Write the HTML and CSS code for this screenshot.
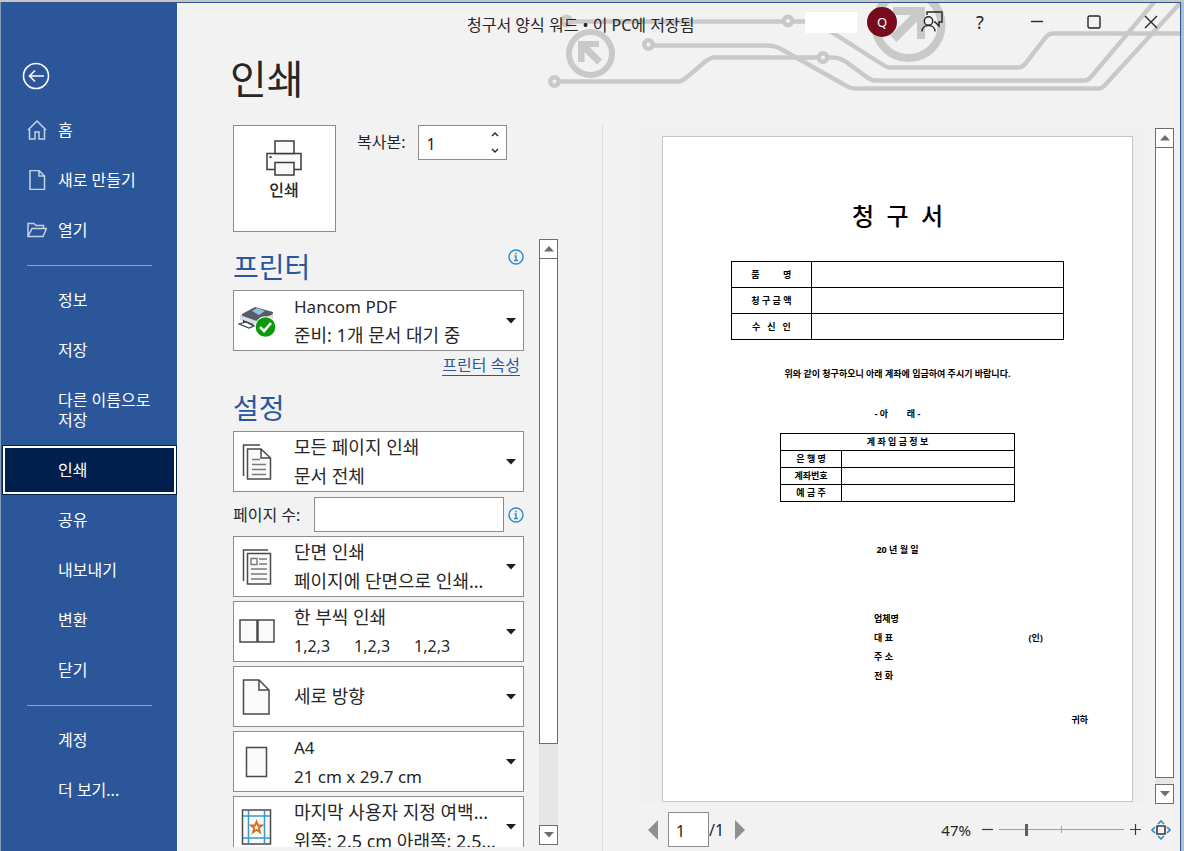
FILE: index.html
```html
<!DOCTYPE html>
<html lang="ko">
<head>
<meta charset="utf-8">
<title>인쇄</title>
<link rel="stylesheet" href="styles.css">
</head>
<body>
<div class="window">
  <nav class="sidebar" aria-label="파일 메뉴">
    <button class="back" aria-label="뒤로">
      <svg width="28" height="28" viewBox="0 0 28 28"><circle cx="14" cy="14" r="12.5"/><path d="M22 14H8M13 8.500L7.500 14l5.500 5.500"/></svg>
    </button>
    <ul class="menu">
      <li><a href="#"><svg class="menu-icon" viewBox="0 0 20 20"><path d="M1 10L10 1l9 9M2.500 9v10H8v-7h4v7h5.500V9"/></svg>홈</a></li>
      <li><a href="#"><svg class="menu-icon" viewBox="0 0 20 20"><path d="M3 .5h9l5.500 5.500v13.500H3zM12 .5V6h5.500"/></svg>새로 만들기</a></li>
      <li><a href="#"><svg class="menu-icon" viewBox="0 0 20 20"><path d="M1 16.500V3.500h6l2 2h7.500v3M1 16.500L5 8.500h14.500L16 16.500z"/></svg>열기</a></li>
      <li class="rule"></li>
      <li><a href="#">정보</a></li>
      <li><a href="#">저장</a></li>
      <li><a href="#">다른 이름으로 저장</a></li>
      <li><a href="#" class="current" aria-current="page">인쇄</a></li>
      <li><a href="#">공유</a></li>
      <li><a href="#">내보내기</a></li>
      <li><a href="#">변환</a></li>
      <li><a href="#">닫기</a></li>
      <li class="rule"></li>
      <li><a href="#">계정</a></li>
      <li><a href="#">더 보기...</a></li>
    </ul>
  </nav>

  <div class="content">
    <svg class="circuit" width="635" height="92" viewBox="545 3 635 92" aria-hidden="true">
      <g class="trace">
        <path d="M572 21.500H782M794 21.500H812L833 33 884 65.500Q887 67.500 890 67.500H1018Q1022 67.500 1025 64L1046 37Q1049 33.500 1053 33.500H1180"/>
        <path d="M654 45.500H768Q775 45.500 781 49L843 84Q850 88.500 855 88.500H1098Q1102 88.500 1105 85L1182 1"/>
        <path d="M560 81.500H677Q682 81.500 687 77L703 63.500Q710 57.500 714 57.500H817M829 57.500H833Q842 58 849 64L866 76.500Q871 80.500 875 80.500H1084Q1088 80.500 1091 77L1155 1"/>
        <circle cx="566.500" cy="21" r="4.300"/><circle cx="788" cy="21" r="4.300"/><circle cx="648.500" cy="44.500" r="4.300"/><circle cx="554.500" cy="81.500" r="4.300"/><circle cx="823" cy="57.500" r="4.300"/>
      </g>
      <circle class="ring" cx="590.500" cy="53.500" r="21.500" stroke-width="6"/>
      <path class="arrow" d="M578 41h21v6h-9.500L602 59.500 597 64.500 584.500 52v10H578z"/>
      <circle class="ring" cx="908.500" cy="25" r="33" stroke-width="8"/>
      <path class="arrow" d="M893 7h32v32h-8V21.500L896.500 42 890.500 35.500 911 15h-18z"/>
    </svg>

    <header class="titlebar">
      <div class="doc-title">청구서 양식 워드 • 이 PC에 저장됨</div>
      <div class="user-name"></div>
      <button class="avatar">Q</button>
      <button class="win-btn feedback" aria-label="피드백"><svg width="24" height="24" viewBox="0 0 24 24"><path d="M7 5V2h15v10h-3v4l-4-4h-1"/><circle cx="8.500" cy="11" r="4.200"/><path d="M2 21.500C2 17.500 5 15.500 8.500 15.500s6.500 2 6.500 6"/></svg></button>
      <button class="win-btn help" aria-label="도움말">?</button>
      <button class="win-btn" aria-label="최소화"><svg width="14" height="14" viewBox="0 0 14 14"><path d="M1 6.500h12"/></svg></button>
      <button class="win-btn" aria-label="최대화"><svg width="14" height="14" viewBox="0 0 14 14"><rect x="1" y="1" width="12" height="12" rx="1.500"/></svg></button>
      <button class="win-btn" aria-label="창 닫기"><svg width="14" height="14" viewBox="0 0 14 14"><path d="M1 1l12 12M13 1L1 13"/></svg></button>
    </header>

    <h1>인쇄</h1>

    <main class="panes">
      <section class="settings">
        <div class="print-row">
          <button class="print-btn">
            <svg width="36" height="36" viewBox="0 0 36 36"><path class="paper-fill" d="M1 13.500h34v16H1z"/><path class="paper-fill" d="M9 1h19v12.500H9zM9 22.500h19V35H9z"/><path class="solid" d="M3.500 16h2v2h-2z"/></svg>
            인쇄
          </button>
          <label for="copies">복사본:</label>
          <div class="spinner">
            <input id="copies" type="text" value="1">
            <button class="step" aria-label="늘리기"><svg width="8" height="5" viewBox="0 0 8 5"><path d="M1 4l3-3 3 3"/></svg></button>
            <button class="step" aria-label="줄이기"><svg width="8" height="5" viewBox="0 0 8 5"><path d="M1 1l3 3 3-3"/></svg></button>
          </div>
        </div>

        <div class="scroller">
          <div class="options">
            <div class="head printer-head">
              <h2>프린터</h2>
              <svg class="info" viewBox="0 0 16 16" role="img" aria-label="정보"><circle cx="8" cy="8" r="7"/><path d="M6.500 7H8v4.500M6 11.500h4M7.200 4.500h1.600" /></svg>
            </div>
            <button class="combo" aria-haspopup="listbox">
              <svg class="combo-icon" viewBox="0 0 38 36"><path fill="#565d66" d="M4 11L17 4l18 5-1 8-14 6L4 17z"/><path fill="#d9dde1" d="M2 12l17 6v6L2 17zM20 18l15-7v6l-15 7z"/><path fill="#8fc0e2" d="M14 8l5-3 8 3-6 4z"/><path fill="#2c3138" d="M5 17l10 4v3L5 19z"/><path fill="#fff" stroke="#3c424a" stroke-width="1.300" d="M1 21l7-2 8 4-5 2z"/><circle cx="27.500" cy="24" r="10.700" fill="#fff"/><circle cx="27.500" cy="24" r="9.800" fill="#0a9a0a"/><path fill="none" stroke="#fff" stroke-width="2.600" d="M22 24l4 4 7-8"/></svg>
              <span class="combo-text"><span class="latin">Hancom PDF</span><span>준비: 1개 문서 대기 중</span></span>
              <svg class="caret" viewBox="0 0 10 6"><path d="M0 0h10L5 5.500z"/></svg>
            </button>
            <a class="props" href="#">프린터 속성</a>

            <div class="head"><h2>설정</h2></div>
            <div class="stack">
              <button class="combo" aria-haspopup="listbox">
                <svg class="combo-icon" viewBox="0 0 38 36"><g class="line"><path d="M5.500 32V1H22"/><path class="paper-fill" d="M9.500 5H23l9.500 9v21h-23zM23 5v9h9.500"/></g><path class="thin" d="M14 15.500h8M14 20.500h14M14 25.500h14M14 30.500h14"/></svg>
                <span class="combo-text"><span>모든 페이지 인쇄</span><span>문서 전체</span></span>
                <svg class="caret" viewBox="0 0 10 6"><path d="M0 0h10L5 5.500z"/></svg>
              </button>
              <div class="pages">
                <label for="pages">페이지 수:</label>
                <input id="pages" type="text">
                <svg class="info" viewBox="0 0 16 16" role="img" aria-label="정보"><circle cx="8" cy="8" r="7"/><path d="M6.500 7H8v4.500M6 11.500h4M7.200 4.500h1.600"/></svg>
              </div>
              <button class="combo" aria-haspopup="listbox">
                <svg class="combo-icon" viewBox="0 0 38 36"><g class="line"><path d="M5.500 32V1H30"/><path class="paper-fill" d="M9.500 4.500h23V35h-23z"/></g><path class="thin" d="M13 9.500h6v6h-6zM21 10h8M21 15h8M13 20h16M13 25h16M13 30h16"/></svg>
                <span class="combo-text"><span>단면 인쇄</span><span>페이지에 단면으로 인쇄...</span></span>
                <svg class="caret" viewBox="0 0 10 6"><path d="M0 0h10L5 5.500z"/></svg>
              </button>
              <button class="combo" aria-haspopup="listbox">
                <svg class="combo-icon" viewBox="0 0 38 36"><g class="line"><path class="paper-fill" d="M2 6h17v22H2zM20 6h16v22H20z"/></g></svg>
                <span class="combo-text"><span>한 부씩 인쇄</span><span class="triples"><span>1,2,3</span><span>1,2,3</span><span>1,2,3</span></span></span>
                <svg class="caret" viewBox="0 0 10 6"><path d="M0 0h10L5 5.500z"/></svg>
              </button>
              <button class="combo" aria-haspopup="listbox">
                <svg class="combo-icon" viewBox="0 0 38 36"><g class="line"><path class="paper-fill" d="M5.500 1H21l10 10v24H5.500zM21 1v10h10"/></g></svg>
                <span class="combo-text"><span>세로 방향</span></span>
                <svg class="caret" viewBox="0 0 10 6"><path d="M0 0h10L5 5.500z"/></svg>
              </button>
              <button class="combo" aria-haspopup="listbox">
                <svg class="combo-icon" viewBox="0 0 38 36"><g class="line"><path class="paper-fill" d="M8.500 3.500h20v29h-20z"/></g></svg>
                <span class="combo-text"><span class="latin">A4</span><span class="latin">21 cm x 29.7 cm</span></span>
                <svg class="caret" viewBox="0 0 10 6"><path d="M0 0h10L5 5.500z"/></svg>
              </button>
              <button class="combo" aria-haspopup="listbox">
                <svg class="combo-icon" viewBox="0 0 38 36"><g class="line"><path class="paper-fill" d="M4.500 1h28v34h-28z"/></g><path fill="none" stroke="#3a96d0" stroke-width="1.500" d="M10.500 2v32M26.500 2v32M5 7h27M5 29h27"/><path fill="none" stroke="#d96b14" stroke-width="1.800" d="M18.500 12.500l1.500 4h4l-3.200 2.600 1.200 4.200-3.500-2.500-3.500 2.500 1.200-4.200L13 16.500h4z"/></svg>
                <span class="combo-text"><span>마지막 사용자 지정 여백...</span><span>위쪽: 2.5 cm 아래쪽: 2.5...</span></span>
                <svg class="caret" viewBox="0 0 10 6"><path d="M0 0h10L5 5.500z"/></svg>
              </button>
            </div>
          </div>
          <div class="scrollbar">
            <button aria-label="위로"><svg class="caret" viewBox="0 0 10 6"><path d="M0 5.500h10L5 0z"/></svg></button>
            <div class="thumb"></div>
            <div class="track"></div>
            <button aria-label="아래로"><svg class="caret" viewBox="0 0 10 6"><path d="M0 0h10L5 5.500z"/></svg></button>
          </div>
        </div>
      </section>

      <section class="preview" aria-label="미리 보기">
        <div class="stage">
          <div class="canvas">
            <article class="paper">
              <h3>청&nbsp; 구&nbsp; 서</h3>
              <table class="bill">
                <tr><th>품&nbsp; &nbsp; &nbsp; &nbsp; &nbsp; 명</th><td></td></tr>
                <tr><th>청 구 금 액</th><td></td></tr>
                <tr><th>수&nbsp; &nbsp;신&nbsp; &nbsp;인</th><td></td></tr>
              </table>
              <p class="notice">위와 같이 청구하오니 아래 계좌에 입금하여 주시기 바랍니다.</p>
              <p class="below">- 아&nbsp; &nbsp; &nbsp; &nbsp; 래 -</p>
              <table class="account">
                <colgroup><col class="key"><col></colgroup>
                <tr><th colspan="2">계 좌 입 금 정 보</th></tr>
                <tr><th>은 행 명</th><td></td></tr>
                <tr><th>계좌번호</th><td></td></tr>
                <tr><th>예 금 주</th><td></td></tr>
              </table>
              <p class="date">20 년 월 일</p>
              <div class="signer">
                <p>업체명</p>
                <p class="seal"><span>대 표</span><span>(인)</span></p>
                <p>주 소</p>
                <p>전 화</p>
              </div>
              <p class="to">귀하</p>
            </article>
          </div>
          <div class="scrollbar">
            <button aria-label="위로"><svg class="caret" viewBox="0 0 10 6"><path d="M0 5.500h10L5 0z"/></svg></button>
            <div class="thumb"></div>
            <div class="track"></div>
            <button aria-label="아래로"><svg class="caret" viewBox="0 0 10 6"><path d="M0 0h10L5 5.500z"/></svg></button>
          </div>
        </div>
        <footer class="pager">
          <button class="turn" aria-label="이전 페이지"><svg width="10" height="20" viewBox="0 0 10 20"><path d="M10 0v20L0 10z"/></svg></button>
          <input class="page-no" type="text" value="1" aria-label="현재 페이지">
          <span class="total">/1</span>
          <button class="turn" aria-label="다음 페이지"><svg width="10" height="20" viewBox="0 0 10 20"><path d="M0 0v20l10-10z"/></svg></button>
          <span class="percent">47%</span>
          <button class="zoom-btn" aria-label="축소"><svg width="11" height="11" viewBox="0 0 11 11"><path d="M0 5.500h11"/></svg></button>
          <input class="zoom" type="range" min="10" max="200" value="50" aria-label="확대/축소">
          <button class="zoom-btn" aria-label="확대"><svg width="11" height="11" viewBox="0 0 11 11"><path d="M0 5.500h11M5.500 0v11"/></svg></button>
          <button class="fit" aria-label="페이지 확대/축소"><svg width="20" height="20" viewBox="0 0 20 20"><path class="blue" d="M7 4l3-3 3 3M7 16l3 3 3-3M4 7l-3 3 3 3M16 7l3 3-3 3"/><path class="dark" d="M6 6h8v8H6z"/></svg></button>
        </footer>
      </section>
    </main>
  </div>
</div>
</body>
</html>
```

FILE: styles.css
```css
* { box-sizing: border-box; }

body {
  margin: 0;
  height: 100vh;
  padding: 2px 3px 0 1px;
  overflow: hidden;
  background: linear-gradient(90deg, #7f9bb8 50%, #b4bfcb 50%);
  color: #262626;
  font: 16px/20px "Noto Sans", "Noto Sans CJK KR", sans-serif;
}

body::before {
  content: "";
  position: absolute;
  inset: 0 0 auto 0;
  height: 2px;
  background: #c9c6c2;
}

button, input {
  margin: 0;
  padding: 0;
  border: 0;
  border-radius: 0;
  background: none;
  color: inherit;
  font: inherit;
}

h1, h2, h3, p, ul { margin: 0; padding: 0; font-weight: inherit; }
svg { flex: none; display: block; }

.window {
  display: grid;
  grid-template-columns: 176px minmax(0, 1fr);
  height: 100%;
  border-top: 1px solid #2b5797;
  border-right: 1px solid #2b5797;
  background: #f2f2f2;
}

/* Sidebar */
.sidebar { background: #2b579a; color: #fff; padding-top: 59px; }
.back { display: block; margin-left: 21px; height: 43px; }
.back svg { fill: none; stroke: #fff; stroke-width: 1.6; margin-bottom: 15px; }
.menu { list-style: none; }
.menu a {
  display: flex;
  position: relative;
  padding: 15px 16px 15px 57px;
  color: inherit;
  text-decoration: none;
}
.menu-icon {
  position: absolute;
  left: 26px;
  top: 15px;
  width: 20px;
  height: 20px;
  fill: none;
  stroke: #c5d1e5;
  stroke-width: 1.5;
}
.menu .rule { height: 1px; margin: 10px 25px 9px 26px; background: #8aa5cd; }
.menu .current {
  margin-left: 1px;
  padding-left: 56px;
  background: #001f4d;
  box-shadow: inset 0 0 0 1px #001f4d, inset 0 0 0 3px #fff;
}

/* Title bar */
.content { position: relative; display: flex; flex-direction: column; min-width: 0; min-height: 0; }
.circuit { position: absolute; top: 0; right: 0; }
.trace { fill: none; stroke: #c9c9c9; stroke-width: 4.4; }
.ring { fill: none; stroke: #c9c9c9; }
.arrow { fill: #c9c9c9; }
.titlebar { position: relative; display: flex; align-items: center; height: 38px; padding-right: 12px; }
.doc-title { flex: 1; padding: 5px 0 0 290px; white-space: nowrap; }
.user-name { width: 52px; height: 21px; background: #fff; }
.avatar {
  width: 30px;
  height: 30px;
  margin: 0 23px 0 10px;
  border-radius: 50%;
  background: #750b1c;
  color: #fff;
  font-size: 13px;
}
.win-btn { display: grid; place-items: center; width: 34px; height: 34px; margin-left: 23px; }
.win-btn svg { fill: none; stroke: #262626; stroke-width: 1.4; }
.feedback { width: 24px; margin: 0; }
.help { width: 24px; margin-right: 5px; margin-left: 24px; font-size: 18px; }

h1 { height: 84px; padding: 8px 0 0 53px; font-size: 40px; line-height: 60px; }

/* Panes */
.panes { display: grid; grid-template-columns: 426px minmax(0, 1fr); flex: 1; min-height: 0; }
.settings {
  display: flex;
  flex-direction: column;
  min-height: 0;
  padding: 0 44px 4px 56px;
  border-right: 1px solid #dcdcdc;
}
.print-row { display: flex; align-items: flex-start; margin-bottom: 7px; }
.print-btn {
  display: flex;
  flex-direction: column;
  align-items: center;
  gap: 4px;
  width: 103px;
  height: 107px;
  padding: 14px 1px 0 0;
  border: 1px solid #8c8c8c;
  background: #fff;
  font-weight: 500;
}
.print-btn svg { fill: none; stroke: #3b3b3b; stroke-width: 1.5; }
.paper-fill { fill: #fafafa; }
.print-btn .solid { fill: #3b3b3b; stroke: none; }
.print-row label { margin: 7px 13px 0 21px; }
.spinner {
  display: grid;
  grid-template-columns: 1fr 22px;
  grid-template-rows: 1fr 1fr;
  width: 89px;
  height: 35px;
  border: 1px solid #8c8c8c;
  background: #fff;
}
.spinner input { grid-row: 1 / 3; min-width: 0; padding: 3px 0 0 7px; }
.step { display: grid; place-items: center; }
.step svg { fill: none; stroke: #262626; stroke-width: 1.4; }

.scroller { display: flex; justify-content: space-between; flex: 1; min-height: 0; }
.options { width: 291px; overflow: hidden; }
.head { display: flex; justify-content: space-between; }
.head h2 { color: #2b579a; font-size: 28px; line-height: 36px; }
.printer-head { padding: 10px 0 5px; }
.info { width: 16px; height: 16px; fill: none; stroke: #2e8bc9; stroke-width: 1.4; }

.combo {
  display: flex;
  align-items: center;
  width: 100%;
  height: 61px;
  padding: 0 7px 0 4px;
  border: 1px solid #8c8c8c;
  background: #fff;
  text-align: left;
}
.combo-icon { width: 38px; height: 36px; margin-right: 18px; }
.combo-text { display: flex; flex-direction: column; flex: 1; min-width: 0; font-size: 18px; line-height: 29px; white-space: nowrap; }
.latin { font-size: 17px; }
.triples { display: flex; gap: 24px; font-size: 16px; }
.line { fill: none; stroke: #4a4a4a; stroke-width: 1.5; }
.thin { fill: none; stroke: #7a7a7a; stroke-width: 1.4; }
.caret { width: 10px; height: 6px; fill: #1f1f1f; }
.props {
  display: block;
  width: max-content;
  margin: 4px 4px 14px auto;
  border-bottom: 1px solid #2b579a;
  color: #2b579a;
  text-decoration: none;
}
.stack { display: flex; flex-direction: column; gap: 4px; margin-top: 5px; }
.pages { display: flex; align-items: center; justify-content: space-between; padding: 1px 0 0; }
.pages input { width: 190px; height: 35px; margin-left: auto; margin-right: 4px; border: 1px solid #8c8c8c; background: #fff; }

.scrollbar { display: flex; flex-direction: column; width: 19px; background: #e6e6e6; }
.scroller .scrollbar { margin-bottom: 2px; }
.scrollbar button { display: grid; place-items: center; height: 20px; border: 1px solid #6e6e6e; background: #fff; }
.scrollbar .caret { fill: #6e6e6e; }
.thumb { flex: 486; border: 1px solid #6e6e6e; border-top-width: 0; background: #fff; }
.track { flex: 81; }

/* Preview */
.preview { display: flex; flex-direction: column; min-width: 0; padding: 3px 6px 4px 38px; }
.stage { display: flex; justify-content: space-between; flex: 1; min-height: 0; }
.canvas { flex: 1; margin-right: 10px; padding: 8px 12px 2px 21px; background: #f0f0f0; }
.paper {
  height: 100%;
  padding-top: 61px;
  border: 1px solid #c6c6c6;
  background: #fff;
  color: #000;
  font-size: 9px;
  font-weight: 700;
  text-align: center;
}
.paper h3 { font-size: 24px; line-height: 36px; font-weight: 500; }
.paper table { margin: 0 auto; border-collapse: collapse; table-layout: fixed; }
.paper th, .paper td { padding: 0; border: 1px solid #000; }
.paper .bill { width: 71%; margin-top: 27px; line-height: 25px; }
.bill th { width: 24%; }
.paper .notice { margin-top: 24px; }
.paper .below { margin-top: 20px; }
.paper .account { width: 50%; margin-top: 9px; line-height: 16px; }
.account .key { width: 26%; }
.paper .date { margin-top: 38px; }
.signer { margin: 49px 19% 0 45%; line-height: 19px; text-align: left; }
.seal { display: flex; justify-content: space-between; }
.paper .to { margin: 25px 44px 0 0; text-align: right; }
.stage .thumb { flex: 620; }
.stage .track { flex: 6; }

.pager { display: flex; align-items: center; height: 35px; margin-top: 8px; padding: 0 3px 0 7px; }
.turn svg { fill: #8f8f8f; }
.page-no { width: 41px; height: 35px; margin-left: 10px; padding: 3px 0 0 7px; border: 1px solid #8c8c8c; background: #fff; }
.total { margin-right: 11px; }
.percent { margin: 0 11px 0 auto; font-size: 15px; }
.zoom-btn svg { stroke: #3b3b3b; stroke-width: 1.2; }
.zoom {
  appearance: none;
  width: 125px;
  height: 12px;
  margin: 0 6px;
  background:
    linear-gradient(#a0a0a0, #a0a0a0) 50% 50% / 1px 7px no-repeat,
    linear-gradient(#a0a0a0, #a0a0a0) 0 50% / 100% 1px no-repeat;
}
.zoom::-webkit-slider-thumb { appearance: none; width: 3px; height: 12px; background: #5f5f5f; }
.fit { margin-left: 10px; }
.fit svg { fill: none; stroke-width: 1.6; }
.blue { stroke: #2e8bc9; }
.dark { stroke: #3b3b3b; }
```
